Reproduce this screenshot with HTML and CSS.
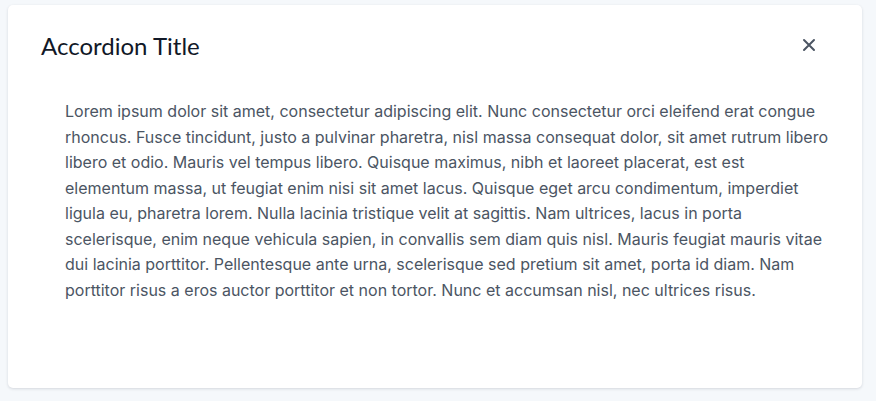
FILE: index.html
```html
<!DOCTYPE html>
<html>
<head>
<meta charset="utf-8">
<link rel="stylesheet" href="styles.css">
</head>
<body>
<div class="card">
  <div class="header">
    <h2 class="title">Accordion Title</h2>
    <button class="close" aria-label="Close">
      <svg width="14" height="14" viewBox="0 0 14 14"><path d="M2 2L12 12M12 2L2 12" stroke="#4b5563" stroke-width="2" stroke-linecap="round"/></svg>
    </button>
  </div>
  <div class="content">
    <p>Lorem ipsum dolor sit amet, consectetur adipiscing elit. Nunc consectetur orci eleifend erat congue rhoncus. Fusce tincidunt, justo a pulvinar pharetra, nisl massa consequat dolor, sit amet rutrum libero libero et odio. Mauris vel tempus libero. Quisque maximus, nibh et laoreet placerat, est est elementum massa, ut feugiat enim nisi sit amet lacus. Quisque eget arcu condimentum, imperdiet ligula eu, pharetra lorem. Nulla lacinia tristique velit at sagittis. Nam ultrices, lacus in porta scelerisque, enim neque vehicula sapien, in convallis sem diam quis nisl. Mauris feugiat mauris vitae dui lacinia porttitor. Pellentesque ante urna, scelerisque sed pretium sit amet, porta id diam. Nam porttitor risus a eros auctor porttitor et non tortor. Nunc et accumsan nisl, nec ultrices risus.</p>
  </div>
</div>
</body>
</html>
```
FILE: styles.css
```css
html, body { margin: 0; padding: 0; }
body {
  background: #f5f8fb;
  padding: 5px 14px 13px 8px;
  font-family: Inter, "Noto Sans", sans-serif;
}
.card {
  background: #fff;
  border-radius: 5px;
  box-shadow: 0 1px 3px rgba(15, 23, 42, 0.14);
  height: 383px;
  box-sizing: border-box;
  padding: 0 33px;
}
.header {
  display: flex;
  align-items: center;
  justify-content: space-between;
  height: 80px;
}
.title {
  margin: 0;
  font-family: Lato, "Noto Sans", sans-serif;
  font-weight: 400;
  font-size: 24px;
  color: #111827;
}
.close {
  background: none;
  border: 0;
  padding: 0;
  margin-right: 13px;
  width: 14px;
  height: 14px;
  display: flex;
}
.content {
  padding: 14px 0 0 24px;
}
.content p {
  margin: 0;
  font-size: 16px;
  line-height: 25.5px;
  color: #4b5563;
}
```
